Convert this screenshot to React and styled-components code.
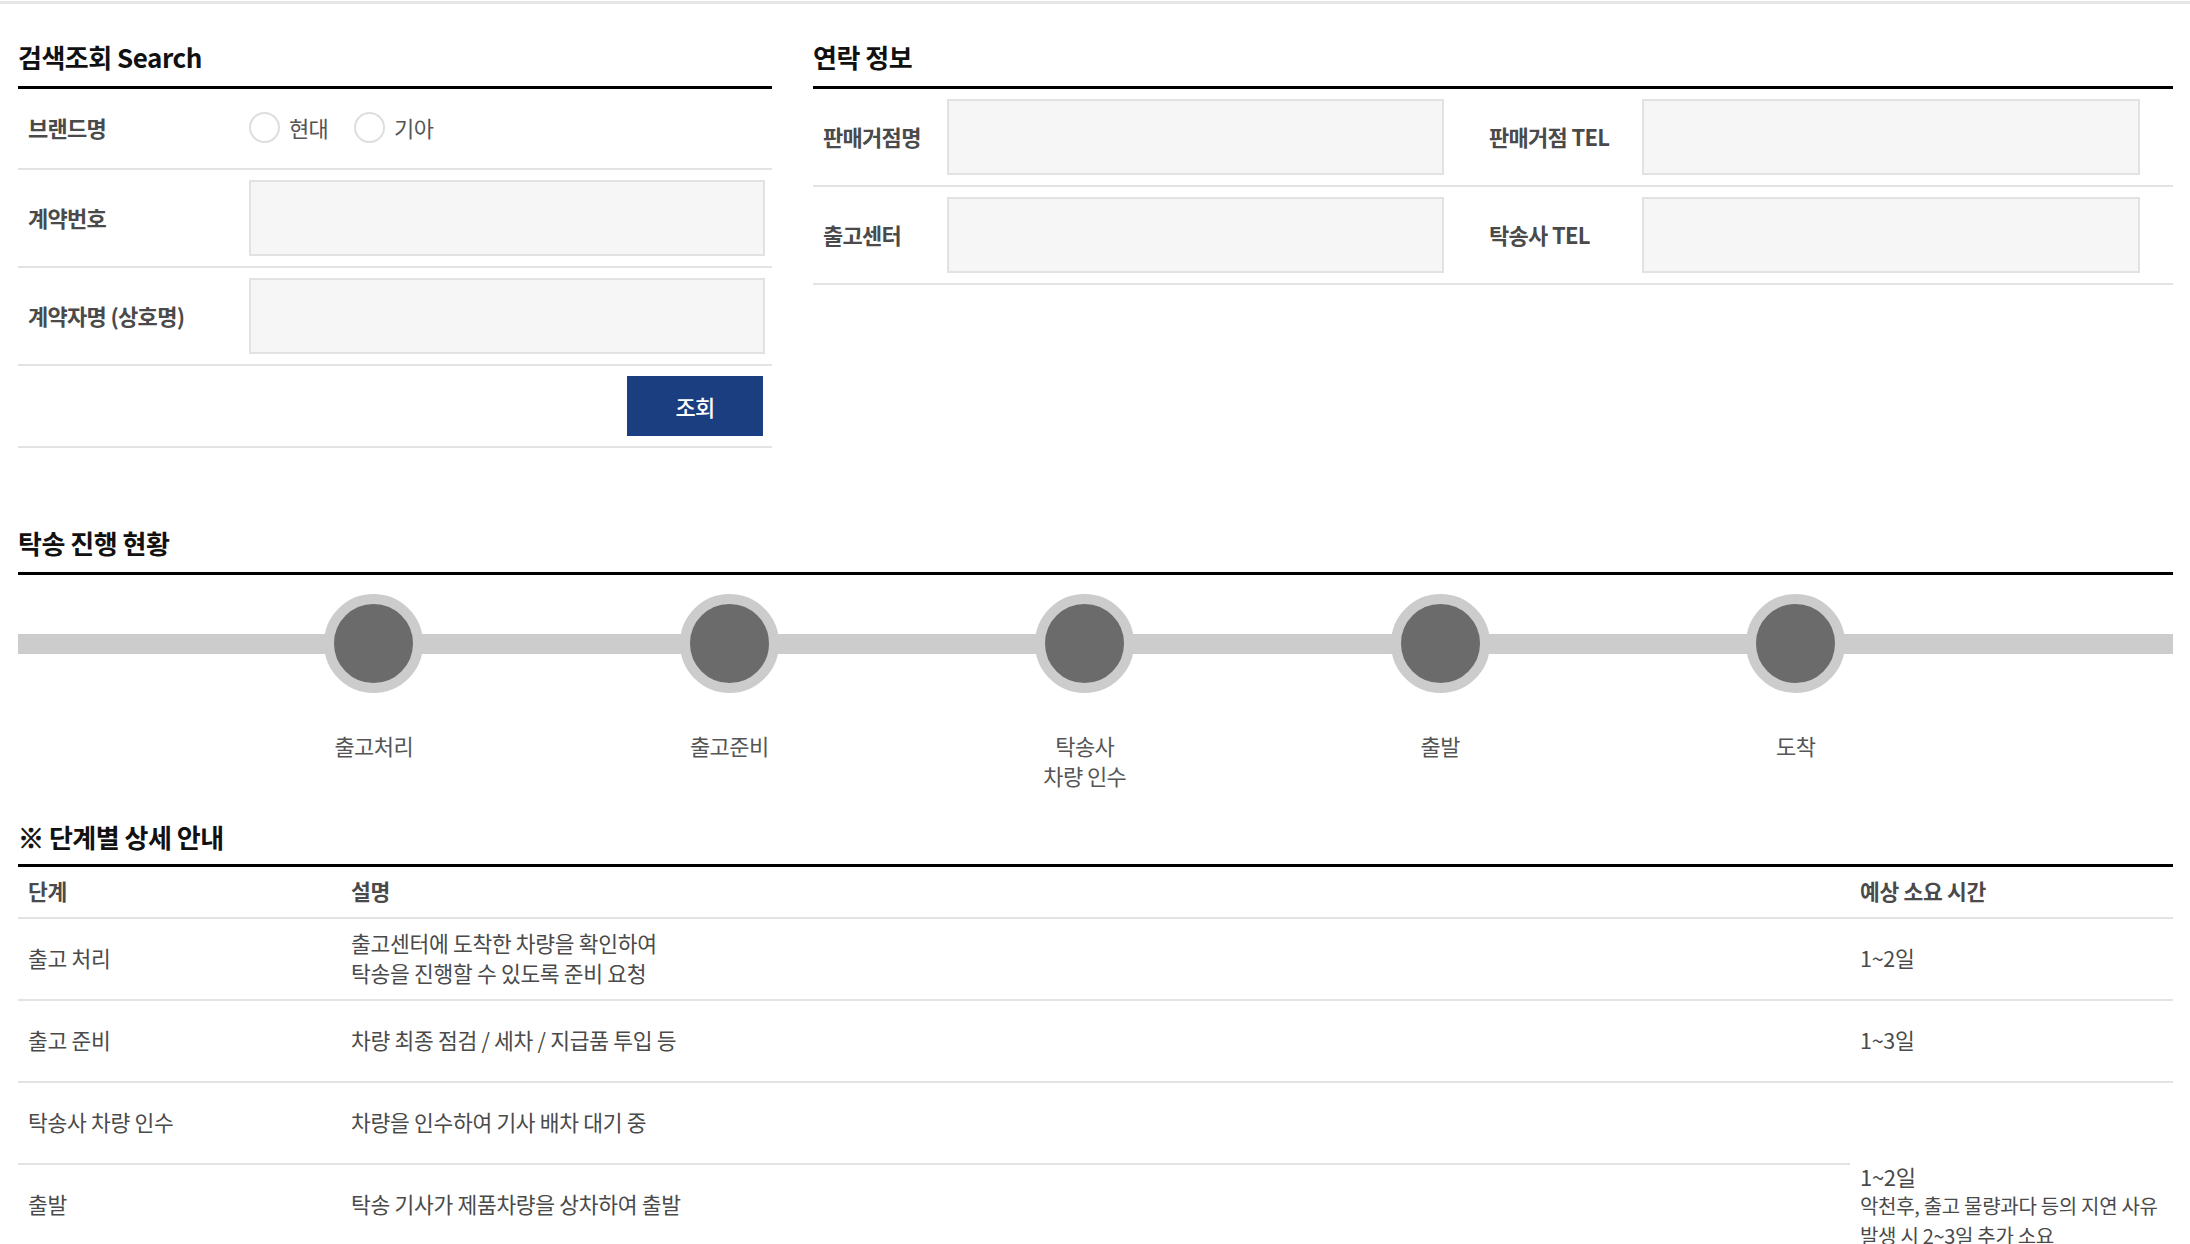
import React from 'react';
import styled, { createGlobalStyle } from 'styled-components';

const GlobalStyle = createGlobalStyle`
    html, body {
        margin: 0;
        padding: 0;
        background: #fff;
    }
    body {
        font-family: "Noto Sans CJK KR", "Noto Sans", sans-serif;
        color: #4a4a4a;
    }
    * {
        box-sizing: border-box;
    }
`;

const Page = styled.div`
    margin-top: 1px;
    border-top: 3px solid #e6e6e6;
    padding: 0 17px 0 18px;
    width: 2190px;
`;

const TopRow = styled.div`
    display: flex;
    gap: 41px;
    padding-top: 33px;
`;

const LeftCol = styled.div`
    width: 754px;
    flex: none;
`;

const RightCol = styled.div`
    flex: 1;
`;

const SectionTitle = styled.h2`
    margin: ${p => p.mt || 0}px 0 0;
    font-size: 26px;
    font-weight: 700;
    line-height: 40px;
    letter-spacing: -0.5px;
    color: #111;
    padding-bottom: ${p => p.pb || 9}px;
    border-bottom: 3px solid #000;
`;

const Mark = styled.span`
    font-weight: 900;
    -webkit-text-stroke: 0.8px #111;
`;

const FormRow = styled.div`
    display: flex;
    align-items: center;
    height: ${p => p.h}px;
    padding: 0 7px 0 10px;
    border-bottom: 2px solid #e3e3e3;
    justify-content: ${p => (p.end ? 'flex-end' : 'flex-start')};
    padding-right: ${p => (p.end ? 9 : 7)}px;
`;

const Label = styled.div`
    width: ${p => p.w || 221}px;
    flex: none;
    font-size: 22px;
    font-weight: 700;
    letter-spacing: -0.7px;
    color: #4a4a4a;
    padding-left: ${p => p.pl || 0}px;
    margin-top: -3px;
`;

const Input = styled.input`
    display: block;
    flex: 1;
    height: 76px;
    width: 100%;
    background: #f6f6f6;
    border: 2px solid #e2e2e2;
    outline: none;
`;

const RadioGroup = styled.div`
    display: flex;
    align-items: center;
    gap: 26px;
    margin-top: -3px;
`;

const RadioLabel = styled.label`
    display: flex;
    align-items: center;
    gap: 9px;
    font-size: 22px;
    letter-spacing: -0.7px;
    color: #555;
`;

const Radio = styled.input`
    appearance: none;
    margin: 0;
    width: 31px;
    height: 31px;
    border-radius: 50%;
    border: 2px solid #dedede;
    background: #fff;
`;

const SearchButton = styled.button`
    width: 136px;
    height: 60px;
    border: none;
    background: #1b3e80;
    color: #fff;
    font-family: inherit;
    font-size: 22px;
    font-weight: 500;
    letter-spacing: -0.7px;
`;

const ContactRow = styled.div`
    display: grid;
    grid-template-columns: 124px 497px 198px 498px;
    align-items: center;
    padding: 10px 0 10px 10px;
    border-bottom: 2px solid #e3e3e3;
`;

const Progress = styled.div`
    position: relative;
    padding-top: 19px;

    &::before {
        content: '';
        position: absolute;
        left: 0;
        right: 0;
        top: 59px;
        height: 20px;
        background: #cccccc;
    }
`;

const Steps = styled.div`
    position: relative;
    display: grid;
    grid-template-columns: repeat(5, 355.5px);
    margin-left: 178px;
`;

const Step = styled.div`
    display: flex;
    flex-direction: column;
    align-items: center;
`;

const Dot = styled.div`
    width: 99px;
    height: 99px;
    border-radius: 50%;
    border: 10px solid #cccccc;
    background: #6b6b6b;
`;

const StepName = styled.div`
    margin-top: 37px;
    font-size: 22px;
    line-height: 30px;
    letter-spacing: -0.6px;
    text-align: center;
    color: #555;
`;

const Table = styled.div`
    display: grid;
    grid-template-columns: 323px 1509px 323px;
    grid-template-rows: 52px repeat(4, 82px);
`;

const Cell = styled.div`
    display: flex;
    flex-direction: column;
    justify-content: ${p => (p.top ? 'flex-start' : 'center')};
    padding-left: 10px;
    padding-bottom: ${p => (p.top ? 0 : 3)}px;
    border-bottom: ${p => (p.noLine ? 'none' : '2px solid #e3e3e3')};
    font-size: 21.5px;
    line-height: 30px;
    letter-spacing: -0.3px;
    font-weight: ${p => (p.head ? 700 : 400)};
    color: #4a4a4a;
`;

const Days = styled.div`
    font-size: 22px;
    line-height: 30px;
    margin-top: -4px;
`;

const Note = styled.div`
    font-size: 20px;
    line-height: 30px;
    letter-spacing: -0.3px;
`;

const steps = [
    ['출고처리'],
    ['출고준비'],
    ['탁송사', '차량 인수'],
    ['출발'],
    ['도착'],
];

function App() {
    return (
        <>
            <GlobalStyle />
            <Page>
                <TopRow>
                    <LeftCol>
                        <SectionTitle>검색조회 Search</SectionTitle>
                        <FormRow h={81}>
                            <Label>브랜드명</Label>
                            <RadioGroup>
                                <RadioLabel><Radio type="radio" name="brand" />현대</RadioLabel>
                                <RadioLabel><Radio type="radio" name="brand" />기아</RadioLabel>
                            </RadioGroup>
                        </FormRow>
                        <FormRow h={98}>
                            <Label>계약번호</Label>
                            <Input />
                        </FormRow>
                        <FormRow h={98}>
                            <Label>계약자명 (상호명)</Label>
                            <Input />
                        </FormRow>
                        <FormRow h={82} end>
                            <SearchButton>조회</SearchButton>
                        </FormRow>
                    </LeftCol>
                    <RightCol>
                        <SectionTitle>연락 정보</SectionTitle>
                        <ContactRow>
                            <Label w={124}>판매거점명</Label>
                            <Input />
                            <Label w={198} pl={45}>판매거점 TEL</Label>
                            <Input />
                        </ContactRow>
                        <ContactRow>
                            <Label w={124}>출고센터</Label>
                            <Input />
                            <Label w={198} pl={45}>탁송사 TEL</Label>
                            <Input />
                        </ContactRow>
                    </RightCol>
                </TopRow>

                <SectionTitle mt={75}>탁송 진행 현황</SectionTitle>
                <Progress>
                    <Steps>
                        {steps.map((lines, i) => (
                            <Step key={i}>
                                <Dot />
                                <StepName>
                                    {lines.map((l, j) => <div key={j}>{l}</div>)}
                                </StepName>
                            </Step>
                        ))}
                    </Steps>
                </Progress>

                <SectionTitle mt={27} pb={7}><Mark>※</Mark> 단계별 상세 안내</SectionTitle>
                <Table>
                    <Cell head>단계</Cell>
                    <Cell head>설명</Cell>
                    <Cell head>예상 소요 시간</Cell>

                    <Cell>출고 처리</Cell>
                    <Cell>
                        <div>출고센터에 도착한 차량을 확인하여</div>
                        <div>탁송을 진행할 수 있도록 준비 요청</div>
                    </Cell>
                    <Cell>1~2일</Cell>

                    <Cell>출고 준비</Cell>
                    <Cell>차량 최종 점검 / 세차 / 지급품 투입 등</Cell>
                    <Cell>1~3일</Cell>

                    <Cell>탁송사 차량 인수</Cell>
                    <Cell>차량을 인수하여 기사 배차 대기 중</Cell>
                    <Cell noLine />

                    <Cell>출발</Cell>
                    <Cell>탁송 기사가 제품차량을 상차하여 출발</Cell>
                    <Cell top>
                        <Days>1~2일</Days>
                        <Note>악천후, 출고 물량과다 등의 지연 사유</Note>
                        <Note>발생 시 2~3일 추가 소요</Note>
                    </Cell>
                </Table>
            </Page>
        </>
    );
}

export default App;
